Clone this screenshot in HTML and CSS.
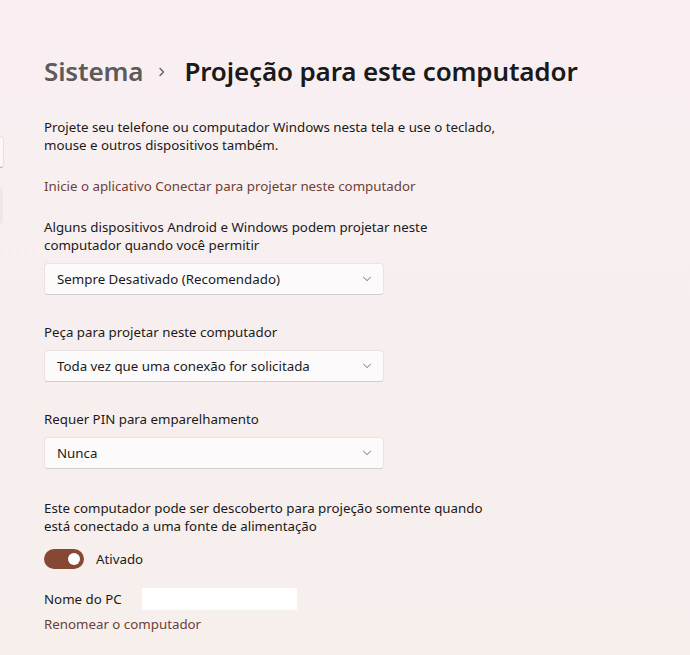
FILE: index.html
```html
<!DOCTYPE html>
<html lang="pt-BR">
<head>
<meta charset="utf-8">
<title>Projeção para este computador</title>
<link rel="stylesheet" href="styles.css">
</head>
<body>
<div class="window">
  <div class="nav-edge">
    <div class="nav-search"></div>
    <div class="nav-item"></div>
  </div>
  <main class="content">
    <h1 class="breadcrumb">
      <span class="crumb-parent">Sistema</span>
      <svg class="crumb-chevron" width="10" height="14" viewBox="0 0 10 14"><path d="M3 3.5 L6.5 7 L3 10.5" fill="none" stroke="#5f5a5a" stroke-width="1.3" stroke-linecap="round" stroke-linejoin="round"/></svg>
      <span class="crumb-current">Projeção para este computador</span>
    </h1>

    <p class="text intro">Projete seu telefone ou computador Windows nesta tela e use o teclado,<br>mouse e outros dispositivos também.</p>

    <a class="link launch" href="#">Inicie o aplicativo Conectar para projetar neste computador</a>

    <section class="setting first">
      <p class="text">Alguns dispositivos Android e Windows podem projetar neste<br>computador quando você permitir</p>
      <div class="select">
        <span>Sempre Desativado (Recomendado)</span>
        <svg class="chev" width="10" height="6" viewBox="0 0 10 6"><path d="M1.5 1.2 L5 4.6 L8.5 1.2" fill="none" stroke="#77716f" stroke-width="1" stroke-linecap="round" stroke-linejoin="round"/></svg>
      </div>
    </section>

    <section class="setting">
      <p class="text">Peça para projetar neste computador</p>
      <div class="select">
        <span>Toda vez que uma conexão for solicitada</span>
        <svg class="chev" width="10" height="6" viewBox="0 0 10 6"><path d="M1.5 1.2 L5 4.6 L8.5 1.2" fill="none" stroke="#77716f" stroke-width="1" stroke-linecap="round" stroke-linejoin="round"/></svg>
      </div>
    </section>

    <section class="setting">
      <p class="text">Requer PIN para emparelhamento</p>
      <div class="select">
        <span>Nunca</span>
        <svg class="chev" width="10" height="6" viewBox="0 0 10 6"><path d="M1.5 1.2 L5 4.6 L8.5 1.2" fill="none" stroke="#77716f" stroke-width="1" stroke-linecap="round" stroke-linejoin="round"/></svg>
      </div>
    </section>

    <section class="setting power">
      <p class="text">Este computador pode ser descoberto para projeção somente quando<br>está conectado a uma fonte de alimentação</p>
      <div class="toggle-row">
        <span class="toggle"><span class="knob"></span></span>
        <span class="text">Ativado</span>
      </div>
    </section>

    <div class="pc-row">
      <span class="text">Nome do PC</span>
      <span class="pc-name"></span>
    </div>
    <a class="link rename" href="#">Renomear o computador</a>
  </main>
</div>
</body>
</html>
```

FILE: styles.css
```css
* { box-sizing: border-box; }
html, body {
  margin: 0;
  height: 100%;
}
body {
  font-family: "Noto Sans", "Open Sans", sans-serif;
  color: #1b1a1a;
  background: linear-gradient(180deg, #f9eff3 0%, #f7efef 45%, #f6efec 100%);
}
.window {
  display: flex;
  min-height: 655px;
}
.nav-edge {
  width: 4px;
  flex: none;
  overflow: hidden;
  display: flex;
  flex-direction: column;
}
.nav-search {
  margin-top: 136px;
  margin-left: -40px;
  width: 44px;
  height: 32px;
  background: #fbf7f7;
  border: 1px solid #e8e1e1;
  border-bottom-color: #b9b3b3;
  border-radius: 4px;
}
.nav-item {
  margin-top: 20px;
  margin-left: -40px;
  width: 43px;
  height: 36px;
  background: #efe7e7;
  border-radius: 4px;
}
.content {
  padding-left: 40px;
  flex: 1;
}
.breadcrumb {
  margin: 47px 0 0 0;
  height: 47px;
  display: flex;
  align-items: center;
  font-size: 26px;
  font-weight: 600;
  letter-spacing: -0.15px;
}
.crumb-parent { color: #5f5a5a; }
.crumb-chevron { margin: 2px 17px 0 14px; }
.crumb-current { color: #1a1a1a; }
.text {
  margin: 0;
  font-size: 13.3px;
  line-height: 18px;
}
.intro { margin-top: 24px; }
.link {
  display: block;
  font-size: 13.3px;
  line-height: 18px;
  color: #6d3f36;
  text-decoration: none;
}
.launch { margin-top: 23px; }
.setting { margin-top: 28px; }
.setting.first { margin-top: 23px; }
.select {
  margin-top: 9px;
  width: 340px;
  height: 32px;
  background: #fcfafa;
  border: 1px solid #e9e3e1;
  border-bottom-color: #d4cdcb;
  border-radius: 4px;
  display: flex;
  align-items: center;
  justify-content: space-between;
  padding: 0 11px 0 12px;
  font-size: 13.3px;
  color: #1b1a1a;
}
.setting.power { margin-top: 30px; }
.toggle-row {
  margin-top: 14px;
  display: flex;
  align-items: center;
  gap: 12px;
}
.toggle {
  width: 40px;
  height: 20px;
  border-radius: 10px;
  background: #874735;
  display: flex;
  align-items: center;
  justify-content: flex-end;
  padding-right: 4px;
}
.knob {
  width: 12px;
  height: 12px;
  border-radius: 50%;
  background: #ffffff;
}
.pc-row {
  margin-top: 19px;
  display: flex;
  align-items: center;
  gap: 20px;
}
.pc-name {
  width: 155px;
  height: 22px;
  background: #ffffff;
}
.rename { margin-top: 5px; }
```
